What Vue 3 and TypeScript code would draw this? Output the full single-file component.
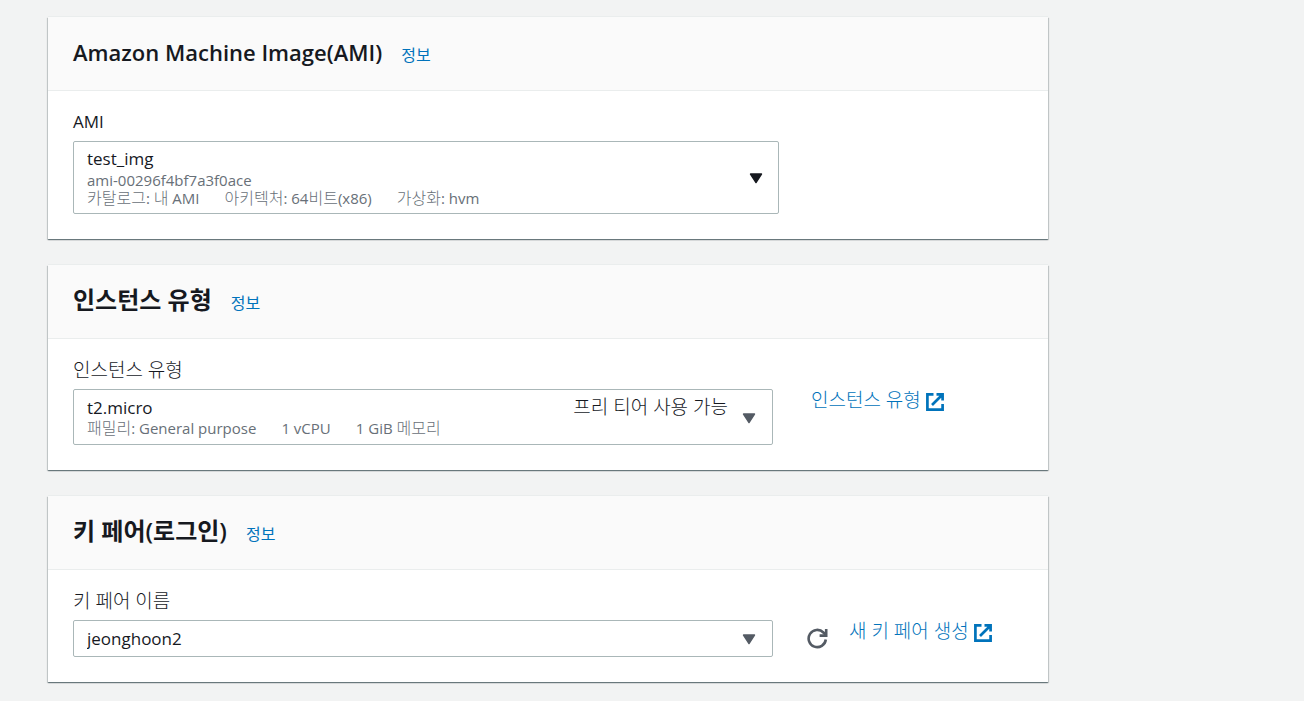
<script setup lang="ts">
import { ref } from 'vue'

interface Section {
  id: string
  title: string
  label: string
  value: string
  lines: string[][]
  tag?: string
  link?: string
  refresh?: boolean
}

const sections = ref<Section[]>([
  {
    id: 'ami',
    title: 'Amazon Machine Image(AMI)',
    label: 'AMI',
    value: 'test_img',
    lines: [['ami-00296f4bf7a3f0ace'], ['카탈로그: 내 AMI', '아키텍처: 64비트(x86)', '가상화: hvm']],
  },
  {
    id: 'instance',
    title: '인스턴스 유형',
    label: '인스턴스 유형',
    value: 't2.micro',
    lines: [['패밀리: General purpose', '1 vCPU', '1 GiB 메모리']],
    tag: '프리 티어 사용 가능',
    link: '인스턴스 유형',
  },
  {
    id: 'keypair',
    title: '키 페어(로그인)',
    label: '키 페어 이름',
    value: 'jeonghoon2',
    lines: [],
    link: '새 키 페어 생성',
    refresh: true,
  },
])

const isHangul = (text: string) => /[가-힣]/.test(text)
const runs = (text: string) => text.split(/([가-힣]+)/).filter(Boolean)
</script>

<template>
  <main class="page">
    <section v-for="s in sections" :key="s.id" class="card" :class="s.id">
      <header class="head">
        <h2 :class="{ ko: isHangul(s.title) }">{{ s.title }}</h2>
        <a href="#" class="info">정보</a>
      </header>
      <div class="body">
        <label :for="s.id" :class="{ ko: isHangul(s.label) }">{{ s.label }}</label>
        <div class="row">
          <div class="box">
            <select :id="s.id" v-model="s.value">
              <option :value="s.value">{{ s.value }}</option>
            </select>
            <div v-if="s.lines.length" class="meta">
              <p v-for="(line, i) in s.lines" :key="i">
                <span v-for="part in line" :key="part"><span v-for="(run, j) in runs(part)" :key="j" :class="{ hangul: isHangul(run) }">{{ run }}</span></span>
              </p>
            </div>
            <span v-if="s.tag" class="tag">{{ s.tag }}</span>
            <svg class="caret" viewBox="0 0 14 11" aria-hidden="true">
              <path d="M1.5 1h11L7 9.6z" fill="currentColor" stroke="currentColor" stroke-width="1.4" stroke-linejoin="round" />
            </svg>
          </div>
          <div v-if="s.link" class="side">
            <button v-if="s.refresh" type="button" class="refresh" aria-label="새로 고침">
              <svg viewBox="0 0 21 21" fill="none" stroke="currentColor" stroke-width="2.6" aria-hidden="true">
                <path d="M18.8 11.5a8.6 8.6 0 1 1-2.4-7L19 7.2" />
                <path d="M19.2 1v6.6h-6.6" />
              </svg>
            </button>
            <a href="#" class="link">
              {{ s.link }}
              <svg viewBox="0 0 18 18" fill="none" stroke="currentColor" stroke-width="2.7" aria-hidden="true">
                <path d="M7.5 1.4H1.4v15.2h15.2v-5.6M10.5 1.4h6.1v6.1M16.3 1.7L6 12" />
              </svg>
            </a>
          </div>
        </div>
      </div>
    </section>
  </main>
</template>

<style>
body {
  margin: 0;
  background: #f2f3f3;
}
</style>

<style scoped>
.page {
  box-sizing: border-box;
  display: flex;
  flex-direction: column;
  gap: 26px;
  padding: 17px 256px 18px 48px;
  font-family: 'Open Sans', 'Noto Sans CJK KR', sans-serif;
  font-size: 17px;
  line-height: 22px;
  color: #16191f;
}
.card {
  background: #fff;
  box-shadow: 0 1px 1px 0 rgba(0, 28, 36, 0.4), 1px 1px 1px 0 rgba(0, 28, 36, 0.15),
    -1px 1px 1px 0 rgba(0, 28, 36, 0.15), 0 -1px 0 0 #eaeded;
}
.head {
  box-sizing: border-box;
  height: 74px;
  display: flex;
  align-items: baseline;
  gap: 19px;
  padding: 20px 25px 0;
  background: #fafafa;
  border-bottom: 1px solid #eaeded;
}
h2 {
  margin: 0;
  font-size: 22px;
  line-height: 30px;
  font-weight: 600;
}
h2.ko {
  font-size: 24px;
}
a {
  color: #0073bb;
  text-decoration: none;
}
.info {
  font-size: 16px;
}
.body {
  padding: 20px 25px 25px;
}
label {
  display: block;
  line-height: 22px;
  margin-bottom: 8px;
}
label.ko,
.tag,
.link {
  font-size: 19px;
  font-weight: 300;
}
.row {
  display: grid;
  grid-template-columns: minmax(0, 1fr) 216px;
  column-gap: 34px;
}
.ami .row {
  grid-template-columns: minmax(0, 1fr);
  padding-right: 244px;
}
.box {
  display: grid;
  grid-template-columns: minmax(0, 1fr) auto 14px;
  column-gap: 14px;
  padding-right: 16px;
  border: 1px solid #aab7b8;
  border-radius: 2px;
}
.ami .box {
  padding-right: 15px;
}
select {
  grid-area: 1 / 1 / 3 / 4;
  appearance: none;
  width: 100%;
  height: 100%;
  min-height: 35px;
  margin: 0;
  padding: 0 13px;
  border: 0;
  background: transparent;
  font: inherit;
  color: inherit;
}
.instance select {
  padding-bottom: 18px;
}
.ami select {
  padding-bottom: 37px;
}
.meta {
  grid-area: 1 / 1 / 3 / 3;
  padding: 29px 13px 6px;
  font-size: 15px;
  line-height: 18px;
  color: #687078;
  pointer-events: none;
}
.instance .meta {
  padding-bottom: 7px;
}
.meta p {
  display: flex;
  gap: 25px;
  height: 18px;
  margin: 0;
}
.hangul {
  font-size: 16px;
  font-weight: 300;
}
.tag {
  grid-area: 1 / 2 / 2 / 3;
  padding-top: 6px;
  pointer-events: none;
}
.caret {
  grid-area: 1 / 3 / 3 / 4;
  align-self: center;
  width: 14px;
  height: 11px;
  margin-top: 2px;
  color: #545b64;
  pointer-events: none;
}
.ami .caret {
  color: #16191f;
}
.side {
  display: flex;
  align-items: flex-start;
  gap: 21px;
  padding-left: 4px;
}
.keypair .side {
  padding-left: 0;
}
.refresh {
  align-self: center;
  display: flex;
  width: 21px;
  padding: 0;
  border: 0;
  background: none;
  color: #545b64;
}
.refresh svg {
  width: 21px;
  height: 21px;
}
.link {
  display: flex;
  align-items: center;
  gap: 5px;
  white-space: nowrap;
}
.link svg {
  width: 18px;
  height: 18px;
  margin-top: 3px;
}
</style>
